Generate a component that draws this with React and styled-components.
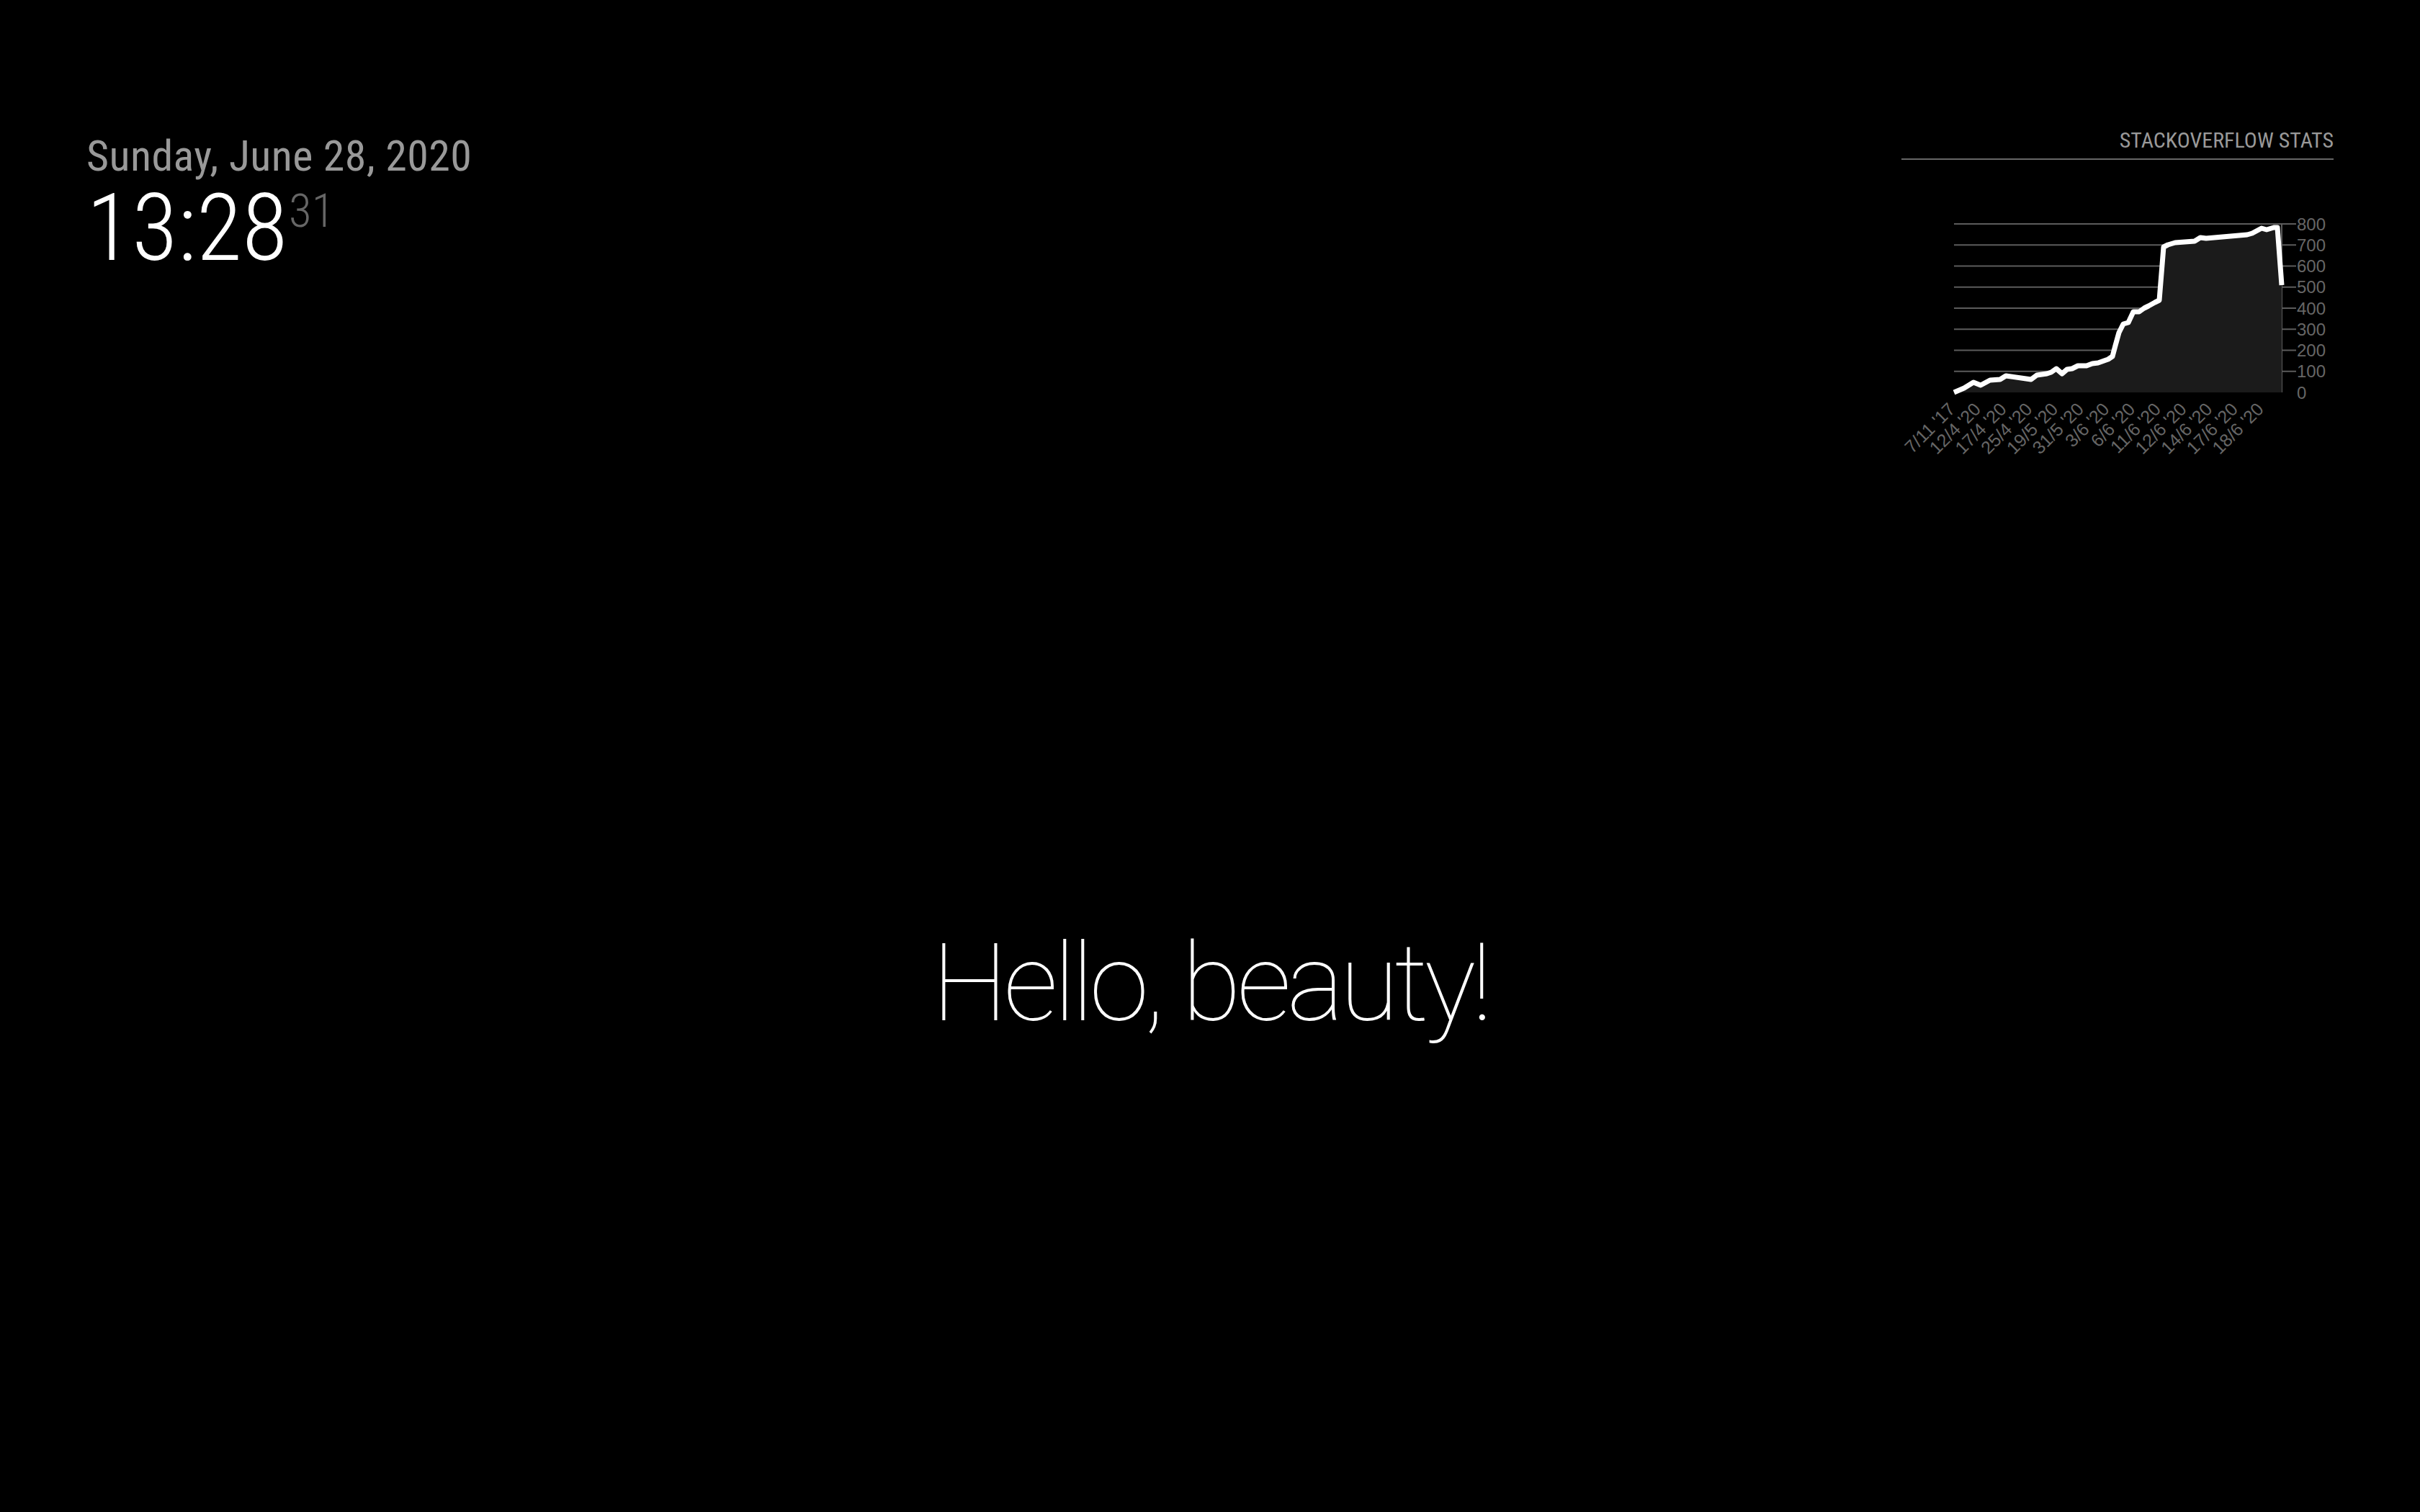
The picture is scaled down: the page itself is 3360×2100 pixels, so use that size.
import React from "react";
import styled, { createGlobalStyle } from "styled-components";

const GlobalStyle = createGlobalStyle`
  html, body {
    margin: 0;
    padding: 0;
    background: #000;
    overflow: hidden;
  }
  body {
    color: #aaa;
    font-family: "Roboto Condensed", Roboto, "Liberation Sans", sans-serif;
  }
`;

const Page = styled.div`
  box-sizing: border-box;
  height: 100vh;
  padding: 180px 120px 0;
  display: grid;
  grid-template-rows: 1111px auto;
`;

const TopBar = styled.div`
  display: flex;
  justify-content: space-between;
  align-items: flex-start;
`;

const Clock = styled.div`
  display: flex;
  flex-direction: column;
`;

const DateLine = styled.div`
  font-family: "Roboto Condensed", Roboto, sans-serif;
  font-stretch: condensed;
  font-weight: 400;
  font-size: 60px;
  line-height: 70px;
  letter-spacing: 0.4px;
  color: #999;
  padding-top: 2px;
`;

const TimeLine = styled.div`
  font-family: "Roboto Condensed", Roboto, sans-serif;
  font-stretch: condensed;
  font-weight: 300;
  font-size: 130px;
  line-height: 130px;
  color: #fff;
`;

const Seconds = styled.span`
  font-size: 65px;
  line-height: 82px;
  vertical-align: top;
  color: #666;
  margin-left: 2px;
`;

const StatsModule = styled.div`
  width: 600px;
  display: flex;
  flex-direction: column;
`;

const ModuleHeader = styled.header`
  font-family: "Roboto Condensed", Roboto, sans-serif;
  font-stretch: condensed;
  font-weight: 400;
  text-transform: uppercase;
  text-align: right;
  font-size: 30px;
  line-height: 30px;
  color: #999;
  padding-bottom: 10px;
  border-bottom: 2px solid #666;
  margin-bottom: 20px;
`;

const ChartSvg = styled.svg`
  display: block;
  width: 600px;
  height: 420px;
`;

const LowerThird = styled.div`
  text-align: center;
`;

const Compliment = styled.div`
  font-family: Roboto, sans-serif;
  font-weight: 100;
  font-size: 150px;
  line-height: 150px;
  letter-spacing: -6px;
  color: #fff;
`;

const points = [
  [2713, 545], [2727, 539], [2740, 531], [2750, 535], [2763, 528], [2777, 527],
  [2785, 522], [2820, 527], [2828, 521], [2842, 519], [2848, 517], [2855, 512],
  [2863, 519], [2870, 513], [2877, 512], [2885, 508], [2897, 508], [2905, 505],
  [2913, 504], [2927, 499], [2933, 495], [2937, 480], [2942, 462], [2948, 450],
  [2955, 448], [2962, 433], [2970, 433], [2977, 428], [2983, 425], [2992, 420],
  [2998, 417], [3004, 343], [3010, 340], [3020, 337], [3047, 335], [3055, 330],
  [3063, 331], [3120, 326], [3127, 324], [3140, 317], [3147, 319], [3157, 316],
  [3162, 316], [3168, 396],
];

const xLabels = [
  "7/11 '17", "12/4 '20", "17/4 '20", "25/4 '20", "19/5 '20", "31/5 '20",
  "3/6 '20", "6/6 '20", "11/6 '20", "12/6 '20", "14/6 '20", "17/6 '20", "18/6 '20",
];

const yVal = (v) => 545 - (v / 100) * 29.25;

function StatsChart() {
  const line = points.map((p) => p.join(",")).join(" ");
  const area = `${line} 3168,545 2713,545`;
  const grid = [100, 200, 300, 400, 500, 600, 700, 800];
  const yTicks = [0, 100, 200, 300, 400, 500, 600, 700, 800];
  return (
    <ChartSvg viewBox="2640 242 600 420">
      {grid.map((v) => (
        <line key={v} x1="2713" x2="3188" y1={yVal(v)} y2={yVal(v)} stroke="#5c5c5c" strokeWidth="2" />
      ))}
      <line x1="3168" x2="3168" y1={yVal(800)} y2="545" stroke="#5c5c5c" strokeWidth="2" />
      <polygon points={area} fill="#1b1b1b" />
      <polyline points={line} fill="none" stroke="#fff" strokeWidth="7" strokeLinejoin="round" strokeLinecap="butt" />
      {yTicks.map((v) => (
        <text
          key={v}
          x="3189"
          y={yVal(v) + 8.5}
          fill="#666"
          fontSize="24"
          fontFamily="'Liberation Sans', Arial, sans-serif"
        >
          {v}
        </text>
      ))}
      {xLabels.map((l, i) => {
        const x = 2716 + i * 35.7;
        const y = 570;
        return (
          <text
            key={l}
            x={x}
            y={y}
            fill="#666"
            fontSize="25"
            fontFamily="'Liberation Sans', Arial, sans-serif"
            textAnchor="end"
            transform={`rotate(-45 ${x} ${y})`}
          >
            {l}
          </text>
        );
      })}
    </ChartSvg>
  );
}

export default function App() {
  return (
    <>
      <GlobalStyle />
      <Page>
        <TopBar>
          <Clock>
            <DateLine>Sunday, June 28, 2020</DateLine>
            <TimeLine>
              13:28<Seconds>31</Seconds>
            </TimeLine>
          </Clock>
          <StatsModule>
            <ModuleHeader>Stackoverflow Stats</ModuleHeader>
            <StatsChart />
          </StatsModule>
        </TopBar>
        <LowerThird>
          <Compliment>Hello, beauty!</Compliment>
        </LowerThird>
      </Page>
    </>
  );
}
